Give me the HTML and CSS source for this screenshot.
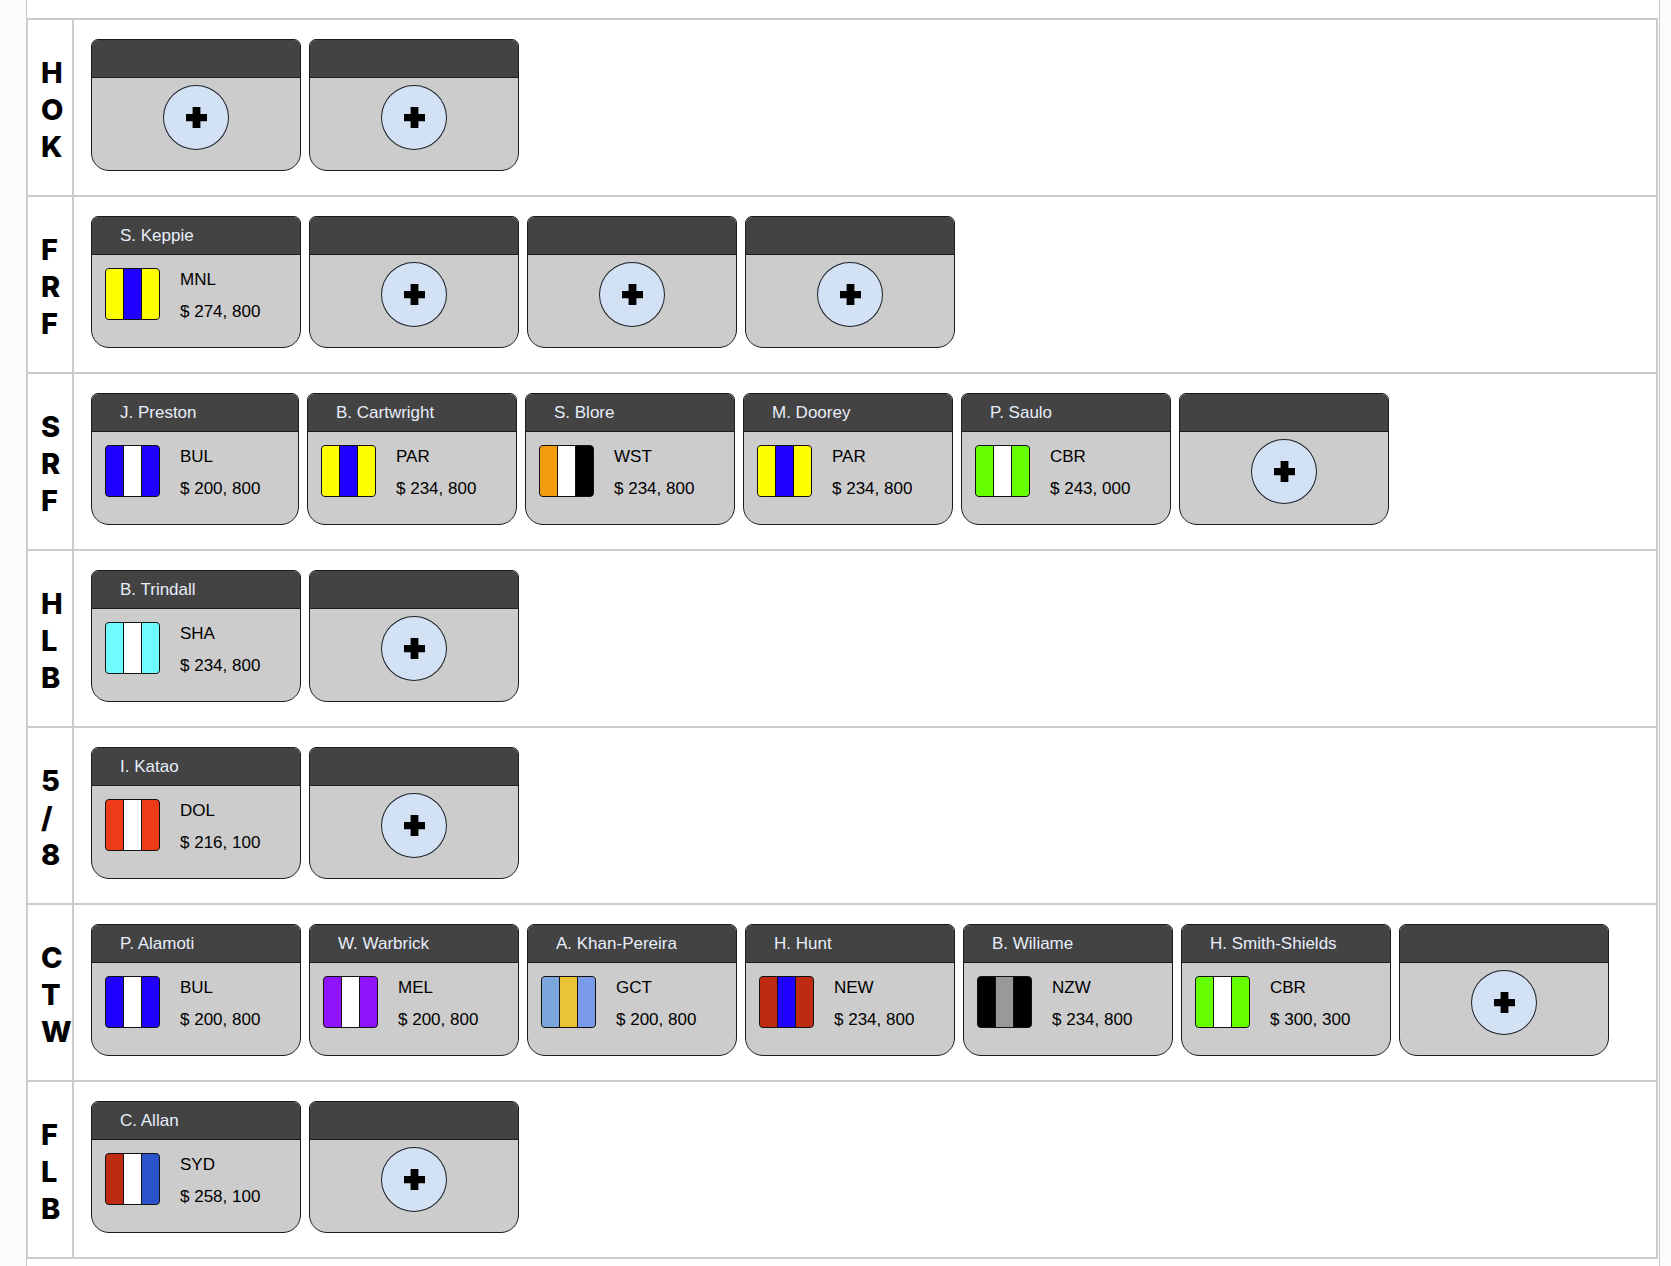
FILE: index.html
```html
<!DOCTYPE html>
<html lang="en">
<head>
<meta charset="utf-8">
<meta name="viewport" content="width=device-width, initial-scale=1">
<title>Squad by position</title>
<link rel="stylesheet" href="styles.css">
</head>
<body>
<svg width="0" height="0" class="defs" aria-hidden="true">
  <symbol id="plus" viewBox="0 0 21 21"><path d="M6.600 0H14.400V7H21V14.200H14.400V21H6.600V14.200H0V7H6.600Z"/></symbol>
</svg>
<main class="page">
<table class="squad">
<tbody>
<tr>
  <th scope="row">H<br>O<br>K</th>
  <td><div class="cards">
    <article class="card"><h2 class="name"></h2><button class="add" type="button" aria-label="Add player"><svg class="plus"><use href="#plus"/></svg></button></article>
    <article class="card"><h2 class="name"></h2><button class="add" type="button" aria-label="Add player"><svg class="plus"><use href="#plus"/></svg></button></article>
  </div></td>
</tr>
<tr>
  <th scope="row">F<br>R<br>F</th>
  <td><div class="cards">
    <article class="card"><h2 class="name">S. Keppie</h2><div class="info"><div class="kit yellow-blue"><i></i><i></i><i></i></div><div><p>MNL</p><p>$ 274, 800</p></div></div></article>
    <article class="card"><h2 class="name"></h2><button class="add" type="button" aria-label="Add player"><svg class="plus"><use href="#plus"/></svg></button></article>
    <article class="card"><h2 class="name"></h2><button class="add" type="button" aria-label="Add player"><svg class="plus"><use href="#plus"/></svg></button></article>
    <article class="card"><h2 class="name"></h2><button class="add" type="button" aria-label="Add player"><svg class="plus"><use href="#plus"/></svg></button></article>
  </div></td>
</tr>
<tr>
  <th scope="row">S<br>R<br>F</th>
  <td><div class="cards">
    <article class="card narrow"><h2 class="name">J. Preston</h2><div class="info"><div class="kit bul"><i></i><i></i><i></i></div><div><p>BUL</p><p>$ 200, 800</p></div></div></article>
    <article class="card"><h2 class="name">B. Cartwright</h2><div class="info"><div class="kit yellow-blue"><i></i><i></i><i></i></div><div><p>PAR</p><p>$ 234, 800</p></div></div></article>
    <article class="card"><h2 class="name">S. Blore</h2><div class="info"><div class="kit wst"><i></i><i></i><i></i></div><div><p>WST</p><p>$ 234, 800</p></div></div></article>
    <article class="card"><h2 class="name">M. Doorey</h2><div class="info"><div class="kit yellow-blue"><i></i><i></i><i></i></div><div><p>PAR</p><p>$ 234, 800</p></div></div></article>
    <article class="card"><h2 class="name">P. Saulo</h2><div class="info"><div class="kit cbr"><i></i><i></i><i></i></div><div><p>CBR</p><p>$ 243, 000</p></div></div></article>
    <article class="card"><h2 class="name"></h2><button class="add" type="button" aria-label="Add player"><svg class="plus"><use href="#plus"/></svg></button></article>
  </div></td>
</tr>
<tr>
  <th scope="row">H<br>L<br>B</th>
  <td><div class="cards">
    <article class="card"><h2 class="name">B. Trindall</h2><div class="info"><div class="kit sha"><i></i><i></i><i></i></div><div><p>SHA</p><p>$ 234, 800</p></div></div></article>
    <article class="card"><h2 class="name"></h2><button class="add" type="button" aria-label="Add player"><svg class="plus"><use href="#plus"/></svg></button></article>
  </div></td>
</tr>
<tr>
  <th scope="row">5<br>/<br>8</th>
  <td><div class="cards">
    <article class="card"><h2 class="name">I. Katao</h2><div class="info"><div class="kit dol"><i></i><i></i><i></i></div><div><p>DOL</p><p>$ 216, 100</p></div></div></article>
    <article class="card"><h2 class="name"></h2><button class="add" type="button" aria-label="Add player"><svg class="plus"><use href="#plus"/></svg></button></article>
  </div></td>
</tr>
<tr>
  <th scope="row">C<br>T<br>W</th>
  <td><div class="cards">
    <article class="card"><h2 class="name">P. Alamoti</h2><div class="info"><div class="kit bul"><i></i><i></i><i></i></div><div><p>BUL</p><p>$ 200, 800</p></div></div></article>
    <article class="card"><h2 class="name">W. Warbrick</h2><div class="info"><div class="kit mel"><i></i><i></i><i></i></div><div><p>MEL</p><p>$ 200, 800</p></div></div></article>
    <article class="card"><h2 class="name">A. Khan-Pereira</h2><div class="info"><div class="kit gct"><i></i><i></i><i></i></div><div><p>GCT</p><p>$ 200, 800</p></div></div></article>
    <article class="card"><h2 class="name">H. Hunt</h2><div class="info"><div class="kit new"><i></i><i></i><i></i></div><div><p>NEW</p><p>$ 234, 800</p></div></div></article>
    <article class="card"><h2 class="name">B. Wiliame</h2><div class="info"><div class="kit nzw"><i></i><i></i><i></i></div><div><p>NZW</p><p>$ 234, 800</p></div></div></article>
    <article class="card"><h2 class="name">H. Smith-Shields</h2><div class="info"><div class="kit cbr"><i></i><i></i><i></i></div><div><p>CBR</p><p>$ 300, 300</p></div></div></article>
    <article class="card"><h2 class="name"></h2><button class="add" type="button" aria-label="Add player"><svg class="plus"><use href="#plus"/></svg></button></article>
  </div></td>
</tr>
<tr>
  <th scope="row">F<br>L<br>B</th>
  <td><div class="cards">
    <article class="card"><h2 class="name">C. Allan</h2><div class="info"><div class="kit syd"><i></i><i></i><i></i></div><div><p>SYD</p><p>$ 258, 100</p></div></div></article>
    <article class="card"><h2 class="name"></h2><button class="add" type="button" aria-label="Add player"><svg class="plus"><use href="#plus"/></svg></button></article>
  </div></td>
</tr>
</tbody>
</table>
</main>
</body>
</html>
```
FILE: styles.css
```css
* {
  box-sizing: border-box;
}

body {
  margin: 0;
  background: #f9fbfd;
  color: #000;
  font: 17px/32px "Liberation Sans", Arial, sans-serif;
}

.defs {
  display: none;
}

.page {
  min-height: 100vh;
  margin: 0 11px 0 26px;
  padding: 18px 0 5px;
  border: solid #c4c7ca;
  border-width: 0 1px;
  background: #fff;
}

/* The grid's left rule sits on the page edge */
.squad {
  width: 100%;
  margin-left: -1px;
  border-collapse: collapse;
}

.squad th,
.squad td {
  box-sizing: content-box;
  border: 2px solid #ccc;
}

.squad th {
  width: 31px;
  padding: 4px 0 0 13px;
  font: 800 29px/37px Inter, "Liberation Sans", sans-serif;
  text-align: left;
  vertical-align: middle;
}

.squad td {
  padding: 19px 0 24px 17px;
}

.cards {
  display: flex;
  flex-wrap: wrap;
  gap: 8px;
}

.card {
  width: 210px;
  height: 132px;
  overflow: hidden;
  border: 1px solid #1c1c1c;
  border-radius: 7px 7px 18px 18px;
  background: #ccc;
}

.narrow {
  width: 208px;
}

.name {
  height: 38px;
  margin: 0;
  padding-left: 28px;
  border-bottom: 1px solid #1c1c1c;
  background: #434343;
  color: #e8eefa;
  font-size: 17px;
  font-weight: 400;
  line-height: 37px;
}

.info {
  display: flex;
  align-items: center;
  gap: 20px;
  padding: 9px 0 0 13px;
}

.info p {
  margin: 0;
}

.add {
  display: flex;
  align-items: center;
  justify-content: center;
  width: 66px;
  height: 65px;
  margin: 7px auto 0;
  padding: 0;
  border: 1px solid #1c2026;
  border-radius: 50%;
  background: #d2e1f4;
}

.plus {
  width: 21px;
  height: 21px;
}

/* Team colours: three stripes with thin dividers */
.kit {
  display: flex;
  gap: 1px;
  width: 55px;
  height: 52px;
  margin-bottom: 4px;
  overflow: hidden;
  border: 1px solid #111;
  border-radius: 4px;
  background: #111;
}

.kit i {
  flex: 1;
  background: var(--side);
}

.kit i:nth-child(2) {
  background: var(--middle, #fff);
}

.kit i:nth-child(3) {
  background: var(--right, var(--side));
}

.yellow-blue { --side: #ff0; --middle: #2000ff; }
.bul { --side: #2000ff; }
.wst { --side: #f39c0e; --right: #000; }
.cbr { --side: #6f0; }
.sha { --side: #6ffcff; }
.dol { --side: #ee3b17; }
.mel { --side: #9013fe; }
.gct { --side: #7ba6dc; --middle: #e9c434; --right: #7a9bea; }
.new { --side: #bf2b12; --middle: #2000ff; }
.nzw { --side: #000; --middle: #999; }
.syd { --side: #bf2b12; --right: #2b53cc; }
```
